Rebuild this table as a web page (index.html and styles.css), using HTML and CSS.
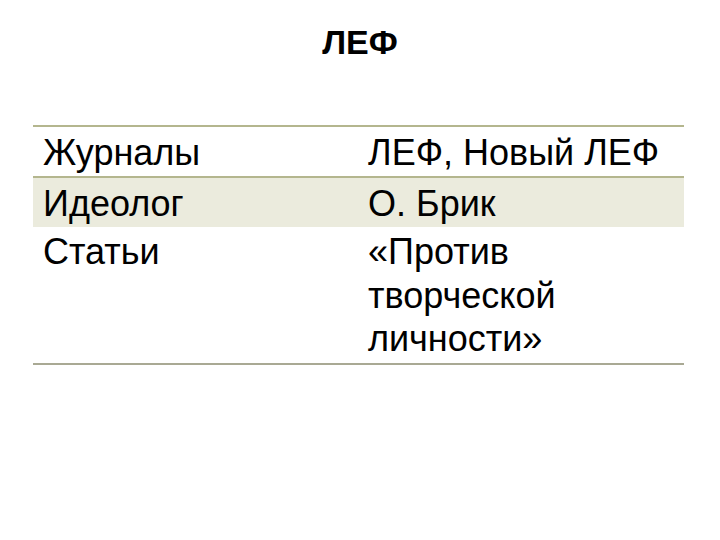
FILE: index.html
```html
<!DOCTYPE html>
<html lang="ru">
<head>
<meta charset="utf-8">
<link rel="stylesheet" href="styles.css">
</head>
<body>
<div class="slide">
  <h1 class="title">ЛЕФ</h1>
  <div class="table">
    <div class="row">
      <div class="cell">Журналы</div>
      <div class="cell">ЛЕФ, Новый ЛЕФ</div>
    </div>
    <div class="row shaded">
      <div class="cell">Идеолог</div>
      <div class="cell">О. Брик</div>
    </div>
    <div class="row last">
      <div class="cell">Статьи</div>
      <div class="cell">«Против<br>творческой<br>личности»</div>
    </div>
  </div>
</div>
</body>
</html>
```
FILE: styles.css
```css
html, body {
  margin: 0;
  padding: 0;
  background: #ffffff;
}
.slide {
  width: 720px;
  height: 540px;
  padding-top: 22px;
  box-sizing: border-box;
  font-family: "Liberation Sans", Arial, sans-serif;
  color: #000;
}
.title {
  margin: 0;
  text-align: center;
  font-size: 34px;
  font-weight: bold;
  line-height: 40px;
  height: 40px;
}
.table {
  margin: 63px 0 0 33px;
  width: 651px;
  border-top: 2px solid #b4b68e;
}
.row {
  display: grid;
  grid-template-columns: 325px 326px;
  border-bottom: 2px solid #b4b68e;
}
.row.shaded {
  background: #ebebdd;
  border-bottom: none;
}
.row.last {
  border-bottom: 2px solid #a9a994;
}
.cell {
  padding: 4px 10px 2px 10px;
  font-size: 36px;
  line-height: 43px;
}
.row.last .cell {
  padding-top: 3px;
  padding-bottom: 2px;
  line-height: 43.5px;
}
```
